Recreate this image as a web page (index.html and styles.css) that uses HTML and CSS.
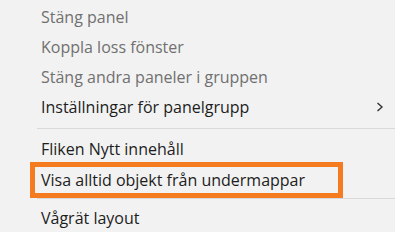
FILE: index.html
```html
<!DOCTYPE html>
<html lang="sv">
<head>
<meta charset="utf-8">
<link rel="stylesheet" href="styles.css">
</head>
<body>
<div class="menu">
  <div class="item disabled">Stäng panel</div>
  <div class="item disabled">Koppla loss fönster</div>
  <div class="item disabled">Stäng andra paneler i gruppen</div>
  <div class="item">
    <span class="label">Inställningar för panelgrupp</span>
    <svg class="chev" width="8" height="10" viewBox="0 0 8 10"><path d="M1.5 1 L6 5 L1.5 9" fill="none" stroke="#333" stroke-width="1.4"/></svg>
  </div>
  <div class="sep sep-top"></div>
  <div class="item short">Fliken Nytt innehåll</div>
  <div class="item boxed">Visa alltid objekt från undermappar</div>
  <div class="sep sep-bottom"></div>
  <div class="item">Vågrät layout</div>
</div>
</body>
</html>
```
FILE: styles.css
```css
html, body {
  margin: 0;
  padding: 0;
  background: #f2f2f2;
}
body {
  width: 395px;
  height: 232px;
  overflow: hidden;
  font-family: "Open Sans", "Noto Sans", sans-serif;
  font-size: 16px;
  color: #1d1d1d;
}
.menu {
  padding-top: 2px;
  display: flex;
  flex-direction: column;
}
.item {
  height: 30px;
  display: flex;
  align-items: center;
  padding-left: 41px;
  padding-right: 11px;
  white-space: nowrap;
}
.item.disabled {
  color: #707070;
}
.label {
  flex: 1;
}
.chev {
  display: block;
}
.sep {
  height: 1px;
  background: #d9d9d9;
  margin-left: 37px;
}
.sep-top {
  margin-top: 6px;
  margin-bottom: 6px;
}
.item.short {
  height: 27px;
}
.item.boxed {
  height: 26px;
  box-sizing: content-box;
  width: 297px;
  margin-left: 30px;
  padding-left: 6px;
  padding-right: 0;
  border: 5px solid #f47b20;
}
.sep-bottom {
  margin-bottom: 4px;
}
```
